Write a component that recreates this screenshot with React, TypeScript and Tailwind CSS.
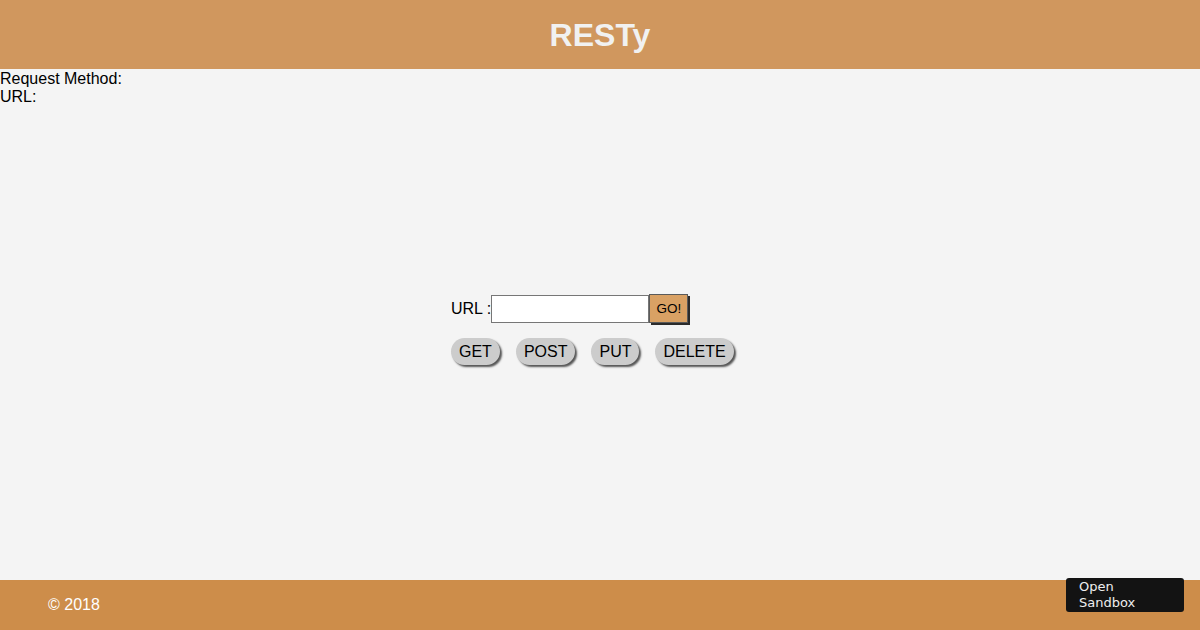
import React, { useState } from "react";

const methods = ["GET", "POST", "PUT", "DELETE"];

export default function App() {
  const [url, setUrl] = useState("");
  const [method, setMethod] = useState("");

  return (
    <div className="min-h-screen flex flex-col bg-[#f4f4f4] text-black font-['Liberation_Sans',Arial,sans-serif]">
      <header className="h-[69px] bg-[#d0975e] flex items-center justify-center">
        <h1 className="text-[32px] font-bold text-[#f1f1f1] leading-none">RESTy</h1>
      </header>

      <main className="h-[511px] flex flex-col">
        <div className="text-base leading-[18px] pt-px">
          <div>Request Method: {method}</div>
          <div>URL: {url}</div>
        </div>

        <form
          className="w-[300px] mx-auto mt-[188px] pl-px"
          onSubmit={(e) => e.preventDefault()}
        >
          <div className="flex items-center h-[29px]">
            <label className="text-base">URL :</label>
            <input
              type="text"
              value={url}
              onChange={(e) => setUrl(e.target.value)}
              className="w-[158px] h-[28px] bg-white border border-[#767676] px-1 text-sm outline-none"
            />
            <button
              type="submit"
              className="h-[29px] w-[39px] bg-[#d9a164] border border-[#5a5a5a] shadow-[2px_2px_0_#2b2b2b] text-[13.5px] leading-none"
            >
              GO!
            </button>
          </div>
          <div className="flex gap-[16px] mt-[15px]">
            {methods.map((m) => (
              <button
                key={m}
                type="button"
                onClick={() => setMethod(m)}
                className="h-[27px] px-2 rounded-full bg-[#cccccc] text-base leading-none shadow-[2px_2px_2px_#555]"
              >
                {m}
              </button>
            ))}
          </div>
        </form>
      </main>

      <footer className="h-[50px] bg-[#cd8d4a] flex items-center pl-[48px]">
        <span className="text-base text-white">© 2018</span>
      </footer>

      <a
        href="#"
        className="fixed right-[16px] bottom-[18px] w-[118px] h-[34px] bg-[#131313] rounded-[3px] text-[#eeeeee] text-[13px] leading-[16px] pl-[13px] pt-px font-['DejaVu_Sans',sans-serif]"
      >
        Open
        <br />
        Sandbox
      </a>
    </div>
  );
}
